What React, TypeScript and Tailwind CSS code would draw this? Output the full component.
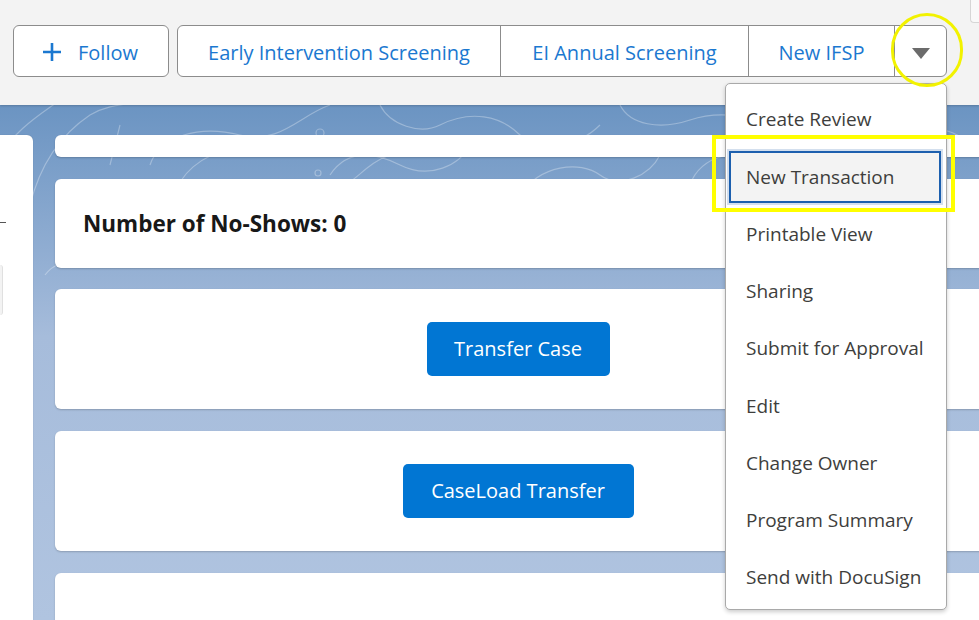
import React from "react";

const menuItems = [
  "Create Review",
  "New Transaction",
  "Printable View",
  "Sharing",
  "Submit for Approval",
  "Edit",
  "Change Owner",
  "Program Summary",
  "Send with DocuSign",
];

function Topo() {
  return (
    <svg
      className="absolute inset-0 w-full h-full"
      viewBox="0 0 979 515"
      preserveAspectRatio="none"
      fill="none"
      stroke="rgba(255,255,255,0.3)"
      strokeWidth="1.2"
    >
      <path d="M-10 60 C 20 20, 40 10, 60 -5" />
      <path d="M30 100 C 40 60, 60 30, 90 10 C 110 -2, 130 0, 150 -5" />
      <path d="M150 60 C 160 30, 200 20, 240 30 C 280 40, 300 10, 330 0" />
      <path d="M175 90 C 180 70, 200 50, 230 45 C 260 40, 280 60, 300 40" />
      <path d="M240 120 C 250 90, 290 80, 320 85 C 350 90, 360 60, 390 50" />
      <path d="M380 0 C 390 20, 420 30, 440 20 C 470 5, 500 10, 520 30 C 540 50, 580 40, 600 20" />
      <path d="M330 70 C 350 40, 380 50, 400 60 C 430 75, 460 60, 470 40" />
      <path d="M520 90 C 540 60, 580 55, 600 70 C 620 85, 650 70, 660 50 C 670 30, 700 25, 720 40" />
      <path d="M620 0 C 630 20, 660 25, 690 15 C 720 5, 760 10, 780 30" />
      <path d="M430 110 C 450 90, 480 95, 500 110" />
      <circle cx="320" cy="28" r="4" />
      <circle cx="318" cy="68" r="3" />
      <path d="M820 0 C 840 30, 880 40, 900 30 C 930 15, 960 25, 985 50" />
      <path d="M690 80 C 700 50, 740 40, 770 60" />
      <path d="M100 150 C 80 160, 60 150, 45 170" />
      <path d="M120 20 L 110 60" />
      <path d="M640 30 C 650 45, 670 50, 690 45" />
    </svg>
  );
}

export default function App() {
  return (
    <div className="relative w-[979px] h-[620px] overflow-hidden bg-[#f3f3f3] font-['Open_Sans','Noto_Sans',sans-serif]">
      {/* Top action bar */}
      <header className="relative z-10 h-[105px] shrink-0 flex items-start pt-[25px] pl-[13px] gap-[8px] bg-[#f3f3f3] shadow-[0_1px_2px_rgba(0,0,0,0.18)]">
        <button className="w-[156px] h-[52px] pt-[4px] flex items-center justify-center gap-[16px] pr-[2px] bg-white border border-[#8c8c8c] rounded-[6px] text-[#1b78d0] text-[20px]">
          <svg width="20" height="20" viewBox="0 0 20 20" stroke="#1b78d0" strokeWidth="2.6" strokeLinecap="butt" className="-mt-[3px]">
            <path d="M10 1 V19 M1 10 H19" />
          </svg>
          <span>Follow</span>
        </button>
        <div className="flex h-[52px] bg-white border border-[#8c8c8c] rounded-[6px] text-[#1b78d0] text-[20px]">
          <div className="w-[323px] pt-[4px] flex items-center justify-center border-r border-[#8c8c8c]">Early Intervention Screening</div>
          <div className="w-[248px] pt-[4px] flex items-center justify-center border-r border-[#8c8c8c]">EI Annual Screening</div>
          <div className="w-[146px] pt-[4px] flex items-center justify-center border-r border-[#8c8c8c]">New IFSP</div>
          <div className="w-[51px] pt-[4px] flex items-center justify-center">
            <svg width="18" height="11" viewBox="0 0 18 11">
              <path d="M0 0 H18 L9 11 Z" fill="#6b6b6b" />
            </svg>
          </div>
        </div>
        <div className="absolute right-0 top-0 w-[9px] h-[23px] bg-[#f9f9f9] border-l border-b border-[#d6d6d6] rounded-bl-[4px]" />
      </header>

      {/* Blue content area */}
      <main className="relative h-[515px] flex gap-[22px] pt-[30px] bg-linear-to-b from-[#6b94c2] via-[#a6bcdb] via-45% to-[#b0c4e0]">
        <Topo />
        <div className="relative w-[33px] shrink-0 bg-white rounded-tr-[6px] shadow-[0_0_1px_rgba(0,0,0,0.25)]">
          <div className="absolute left-0 top-[87px] w-[6px] h-[1px] bg-[#555]" />
          <div className="absolute left-0 top-[130px] w-[3px] h-[50px] bg-[#f3f3f3] border-r border-[#e0e0e0] rounded-r-[3px]" />
        </div>
        <div className="relative flex-1 flex flex-col gap-[22px] mr-[-2px]">
          <div className="h-[22px] shrink-0 bg-white rounded-l-[6px] shadow-[0_1px_2px_rgba(0,0,0,0.2)]" />
          <div className="h-[89px] shrink-0 bg-white rounded-l-[6px] shadow-[0_1px_2px_rgba(0,0,0,0.2)] flex items-center pl-[28px]">
            <span className="text-[22.5px] font-bold text-[#181818]">Number of No-Shows: 0</span>
          </div>
          <div className="h-[120px] shrink-0 -mt-[1px] bg-white rounded-l-[6px] shadow-[0_1px_2px_rgba(0,0,0,0.2)] flex items-center justify-center">
            <button className="w-[183px] h-[54px] bg-[#0176d3] text-white text-[20px] rounded-[5px]">Transfer Case</button>
          </div>
          <div className="h-[120px] shrink-0 bg-white rounded-l-[6px] shadow-[0_1px_2px_rgba(0,0,0,0.2)] flex items-center justify-center">
            <button className="w-[231px] h-[54px] bg-[#0176d3] text-white text-[20px] rounded-[5px]">CaseLoad Transfer</button>
          </div>
          <div className="h-[120px] shrink-0 bg-white rounded-l-[6px] shadow-[0_1px_2px_rgba(0,0,0,0.2)]" />
        </div>
      </main>

      {/* Dropdown menu overlay */}
      <div className="absolute z-20 left-[725px] top-[83px] w-[222px] h-[527px] bg-white border border-[#a9a9a9] rounded-[5px] shadow-[0_2px_4px_rgba(0,0,0,0.2)] pt-[7px] flex flex-col text-[19px] text-[#3e3e3c]">
        {menuItems.map((item) =>
          item === "New Transaction" ? (
            <div key={item} className="h-[57.25px] shrink-0 py-[3px] pl-[3px] pr-[5px]">
              <div className="h-full flex items-center pl-[15px] bg-[#f3f3f3] border-2 border-[#1c5fae] ring-2 ring-[#d3dfee]">
                {item}
              </div>
            </div>
          ) : (
            <div key={item} className="h-[57.25px] shrink-0 flex items-center pl-[20px]">
              {item}
            </div>
          )
        )}
      </div>

      {/* Yellow annotations */}
      <div className="absolute z-30 left-[712px] top-[135px] w-[243px] h-[77px] border-4 border-[#ffff00]" />
      <div className="absolute z-30 left-[891px] top-[13px] w-[72px] h-[74px] rounded-full border-[3px] border-[#f2f200]" />
    </div>
  );
}
